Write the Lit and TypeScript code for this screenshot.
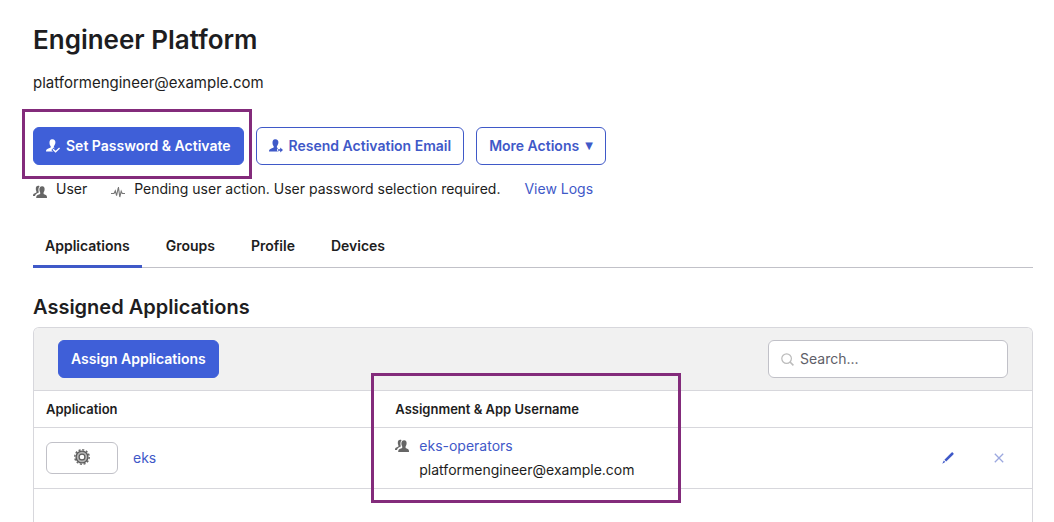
import { LitElement, html, css, svg } from "lit";
import { customElement, state } from "lit/decorators.js";
import { classMap } from "lit/directives/class-map.js";

const bust = svg`<path d="M6 0.2C8.2 0 9.6 1.3 9.4 3.6C9.3 5.2 8.6 6.4 7.9 7.2V8.4L9.2 9.2L8 10.4L9.8 12.6H0C0 10.9 0.6 10.2 1.8 9.7L4.7 8.5V7.2C3.9 6.2 3.5 5 3.5 3.4C3.5 1.5 4.3 0.3 6 0.2Z" fill="currentColor"/>`;

const activateIcon = html`<svg class="icon" viewBox="0 0 14 14" aria-hidden="true">
  ${bust}<path d="M6.6 9.8L9.6 12.8L14.2 8.6" fill="none" stroke="#3f5fd8" stroke-width="3.6"/>
  <path d="M7 10.2L9.6 12.8L13.6 9" fill="none" stroke="currentColor" stroke-width="1.4"/>
</svg>`;

const resendIcon = html`<svg class="icon" viewBox="0 0 14 14" aria-hidden="true">
  ${bust}<path d="M8 11H13.6M11.4 8.6L13.8 11L11.4 13.4" fill="none" stroke="#fff" stroke-width="2.6"/>
  <path d="M8.8 10.3H11.2V8.4L14 11L11.2 13.6V11.7H8.8Z" fill="currentColor"/>
</svg>`;

const groupIcon = html`<svg class="icon people" viewBox="0 0 14 13" aria-hidden="true">
  <path d="M3.4 1C4.4 0.1 5.8 0.2 6.6 0.8C5.4 2.1 5.2 4.2 5.6 5.8L5.8 7L3.4 8.3C2.6 8.8 2.2 9.5 2 10.6H0C0 9 0.4 8.4 1.4 8L3.4 7.1V5.8C2.7 4.6 2.5 2.2 3.4 1Z" fill="currentColor"/>
  <path d="M9 0.8C11 0.7 11.8 2 11.6 4C11.5 5.4 11.1 6.2 10.6 6.9V8.6L12.8 9.6C13.8 10.1 14 11 14 12.6H3.2C3.2 10.9 3.6 10.1 4.6 9.6L7.2 8.5V6.9C6.6 6 6.3 5 6.4 3.6C6.5 1.9 7.4 0.9 9 0.8Z" fill="currentColor"/>
</svg>`;

const pulseIcon = html`<svg class="icon pulse" viewBox="0 0 14 12" aria-hidden="true">
  <path d="M0 7.5H3L4.3 4.8L5.6 9.6L7.4 1L8.8 11L10.2 5.2L11.2 7.5H14" fill="none" stroke="currentColor" stroke-width="1.1"/>
</svg>`;

const gearIcon = html`<svg class="gear" viewBox="0 0 16 16" aria-hidden="true">
  <circle cx="8" cy="8" r="7.2" fill="none" stroke="#666" stroke-width="1.4" stroke-dasharray="2.1 1.67"/>
  <circle cx="8" cy="8" r="5.9" fill="#b4b4b4" stroke="#5c5c5c" stroke-width="1.4"/>
  <circle cx="8" cy="8" r="2.9" fill="#fff" stroke="#5c5c5c" stroke-width="1.2"/>
</svg>`;

const searchIcon = html`<svg class="lens" viewBox="0 0 13 13" aria-hidden="true">
  <circle cx="5.6" cy="5.6" r="4.8" fill="none" stroke="currentColor" stroke-width="1.2"/>
  <path d="M9 9L12.4 12.4" stroke="currentColor" stroke-width="1.6"/>
</svg>`;

const editIcon = html`<svg class="edit" viewBox="0 0 12 12" aria-hidden="true">
  <path d="M9.6 0.5Q10.2 0 10.8 0.6L11.4 1.2Q12 1.8 11.4 2.4L4.2 9.5L2.4 7.7Z" fill="currentColor"/>
  <path d="M1.8 8.6L3.3 10.1L0.3 11.7Z" fill="currentColor"/>
</svg>`;

const removeIcon = html`<svg class="remove" viewBox="0 0 10 10" aria-hidden="true">
  <path d="M0.8 0.8L9.2 9.2M9.2 0.8L0.8 9.2" stroke="currentColor" stroke-width="1.3"/>
</svg>`;

@customElement("app-root")
export class AppRoot extends LitElement {
  @state() private tab = "Applications";

  static styles = css`
    :host {
      display: flex;
      flex-direction: column;
      box-sizing: border-box;
      height: 100vh;
      overflow: hidden;
      padding: 21px 21px 0 33px;
      background: #fff;
      color: #1d1d21;
      font: 14px/24px Inter, "Liberation Sans", sans-serif;
    }
    * { box-sizing: border-box; }
    h1, h2, p { margin: 0; }
    h1 { font-size: 26px; font-weight: 600; line-height: 38px; }
    .login { margin-top: 12px; font-size: 15px; }
    a { color: #3f59c8; text-decoration: none; }
    button { font: inherit; cursor: pointer; }
    .actions { display: flex; gap: 12px; margin-top: 32px; }
    .marked { position: relative; }
    .mark {
      position: absolute;
      border: 3px solid #832b7b;
      pointer-events: none;
    }
    .mark-activate { inset: -18px -8px -14px -11px; }
    .mark-assignment { top: -18px; left: -12px; width: 310px; height: 130px; }
    .btn {
      display: flex;
      align-items: center;
      gap: 6px;
      height: 38px;
      padding: 0 12px;
      border: 1px solid #3f59c8;
      border-radius: 6px;
      background: #fff;
      color: #3f59c8;
      font-weight: 600;
      white-space: nowrap;
    }
    .primary { background: #3f5fd8; border-color: #3f5fd8; color: #fff; }
    .icon { width: 14px; height: 14px; flex: none; }
    .people { color: #666; }
    .pulse { color: #777; }
    .caret { font: 10px/24px "DejaVu Sans", sans-serif; }
    .status { display: flex; margin-top: 12px; }
    .fact { display: flex; gap: 9px; margin-right: 24px; }
    .fact .icon { margin-top: 8px; }
    .tabs {
      display: flex;
      gap: 12px;
      margin-top: 24px;
      border-bottom: 1px solid #c1c1c8;
    }
    .tab {
      height: 43px;
      margin-bottom: -1px;
      padding: 2px 12px 0;
      border: 0;
      border-bottom: 3px solid transparent;
      background: none;
      color: inherit;
      font-weight: 600;
    }
    .current { border-color: #3f59c8; }
    h2 { margin-top: 24px; font-size: 20px; font-weight: 600; line-height: 30px; }
    .panel {
      flex: 1;
      margin-top: 5px;
      border: 1px solid #d7d7dc;
      border-bottom: 0;
      border-radius: 6px 6px 0 0;
    }
    .toolbar {
      display: flex;
      justify-content: space-between;
      padding: 12px 24px;
      border-radius: 5px 5px 0 0;
      background: #f1f1f1;
    }
    .search {
      display: flex;
      align-items: center;
      gap: 6px;
      width: 240px;
      height: 38px;
      padding: 0 12px;
      border: 1px solid #c1c1c8;
      border-radius: 6px;
      background: #fff;
    }
    .lens { width: 13px; height: 13px; flex: none; color: #bbb; }
    .search input {
      flex: 1;
      min-width: 0;
      padding: 0;
      border: 0;
      outline: 0;
      background: none;
      font: inherit;
    }
    .search input::placeholder { color: #5e5e68; opacity: 1; }
    table { width: 100%; border-collapse: separate; border-spacing: 0; table-layout: fixed; }
    th, td { border-top: 1px solid #d7d7dc; padding: 0 12px; text-align: left; }
    th { height: 37px; font-size: 13px; font-weight: 600; }
    td { height: 62px; border-bottom: 1px solid #d7d7dc; vertical-align: middle; }
    .col-app { width: 35%; }
    .col-actions { width: 102px; }
    .app { display: flex; align-items: center; gap: 15px; }
    .logo {
      display: flex;
      justify-content: center;
      align-items: center;
      width: 72px;
      height: 32px;
      padding-bottom: 2px;
      border: 1px solid #c1c1c8;
      border-radius: 6px;
    }
    .gear { width: 16px; height: 16px; }
    .assignee { display: flex; align-items: center; gap: 10px; }
    .username { padding-left: 24px; }
    .tools { display: flex; justify-content: space-between; padding-right: 16px; }
    .tool {
      display: flex;
      align-items: center;
      padding: 0;
      border: 0;
      background: none;
      color: #3f59c8;
    }
    .faint { color: #9ca8df; }
    .edit { width: 12px; height: 12px; }
    .remove { width: 10px; height: 10px; }
  `;

  private renderTab(name: string) {
    const active = this.tab === name;
    return html`<button
      class=${classMap({ tab: true, current: active })}
      role="tab"
      aria-selected=${active}
      @click=${() => (this.tab = name)}
    >${name}</button>`;
  }

  render() {
    return html`
      <h1>Engineer Platform</h1>
      <p class="login">platformengineer@example.com</p>

      <div class="actions">
        <div class="marked">
          <button class="btn primary">${activateIcon}Set Password &amp; Activate</button>
          <div class="mark mark-activate"></div>
        </div>
        <button class="btn">${resendIcon}Resend Activation Email</button>
        <button class="btn" aria-haspopup="true">More Actions <span class="caret">▼</span></button>
      </div>

      <div class="status">
        <span class="fact">${groupIcon}User</span>
        <span class="fact">${pulseIcon}Pending user action. User password selection required.</span>
        <a href="#logs">View Logs</a>
      </div>

      <div class="tabs" role="tablist">
        ${["Applications", "Groups", "Profile", "Devices"].map((name) => this.renderTab(name))}
      </div>

      <h2>Assigned Applications</h2>
      <section class="panel">
        <div class="toolbar">
          <button class="btn primary">Assign Applications</button>
          <label class="search">${searchIcon}<input type="search" placeholder="Search..." aria-label="Search" /></label>
        </div>
        <table>
          <thead>
            <tr>
              <th class="col-app">Application</th>
              <th class="marked">Assignment &amp; App Username<div class="mark mark-assignment"></div></th>
              <th class="col-actions" aria-label="Actions"></th>
            </tr>
          </thead>
          <tbody>
            <tr>
              <td>
                <div class="app"><span class="logo">${gearIcon}</span><a href="#eks">eks</a></div>
              </td>
              <td>
                <div class="assignee">${groupIcon}<a href="#eks-operators">eks-operators</a></div>
                <div class="username">platformengineer@example.com</div>
              </td>
              <td>
                <div class="tools">
                  <button class="tool" aria-label="Edit">${editIcon}</button>
                  <button class="tool faint" aria-label="Remove">${removeIcon}</button>
                </div>
              </td>
            </tr>
          </tbody>
        </table>
      </section>
    `;
  }
}
